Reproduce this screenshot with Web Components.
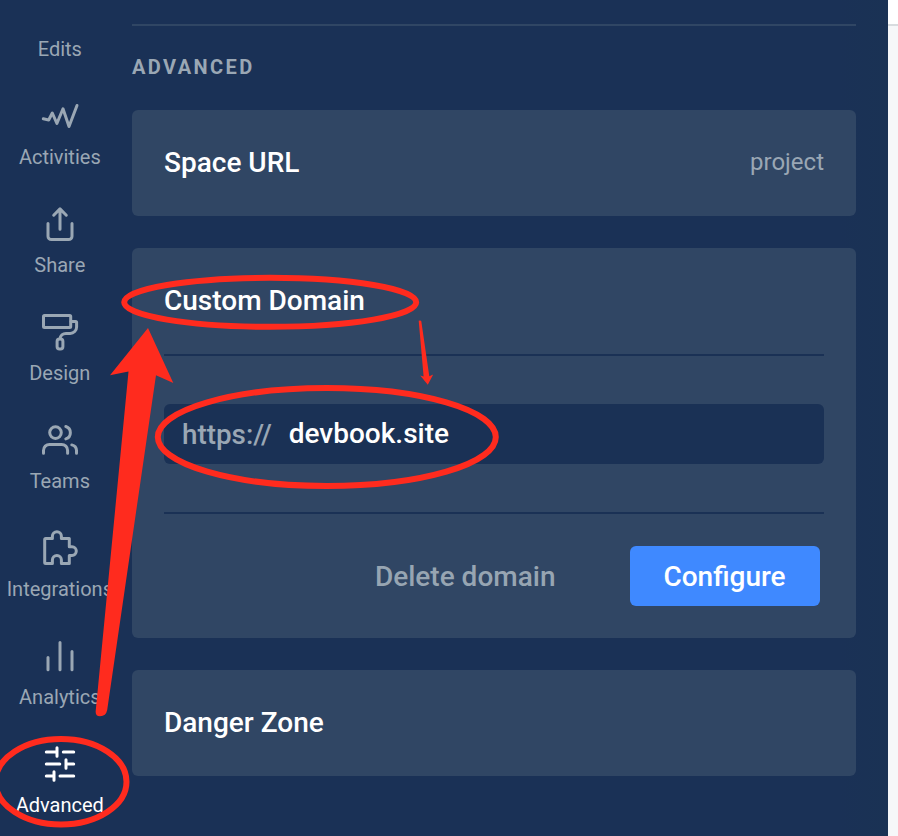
<!DOCTYPE html>
<html lang="en">
<head>
<meta charset="utf-8">
<title>Space settings</title>
<style>
html,body{margin:0;height:100%;overflow:hidden}
body{font-family:Roboto,"Liberation Sans",sans-serif;background:#f6f7f9}
</style>
</head>
<body>
<settings-app></settings-app>
<script>
const define=(name,html,setup)=>customElements.define(name,class extends HTMLElement{
  constructor(){
    super();
    const t=document.createElement('template');
    t.innerHTML=html;
    this.attachShadow({mode:'open'}).append(t.content.cloneNode(true));
  }
  connectedCallback(){ if(setup) setup(this,this.shadowRoot); }
});

const ICONS={
  none:'',
  activities:'<path d="M3.3 22.8 8.7 24 12.3 17 16.9 27.5 23 12.8 29 30.5 37 9.5"/>',
  share:'<path d="M20 25.2V5M13.7 11.2 20 4.9l6.3 6.3M8 19.6V32.2a3.4 3.4 0 0 0 3.4 3.4H28.6a3.4 3.4 0 0 0 3.4-3.4V19.6"/>',
  design:'<rect x="3.5" y="3.4" width="27.2" height="12" rx="1"/><path d="M31 9.4h4.6a1 1 0 0 1 1 1v4.6a6.4 6.4 0 0 1-6.4 6.4H26a6 6 0 0 0-6 5.4"/><rect x="17.1" y="27" width="5.8" height="10" rx="2.4"/>',
  teams:'<circle cx="15.5" cy="12.6" r="5.8"/><path d="M25.8 6.5a6.5 6.5 0 0 1 0 12.4M3.5 33.3V30.4a6 6 0 0 1 6-6H21.6a6 6 0 0 1 6 6v2.9M31.8 24.9a6 6 0 0 1 4.7 5.6v2.8"/>',
  integrations:'<path d="M5.7 10.4H12.4V8.2a4.5 4.5 0 0 1 9 0V10.4H29.3V18.8H32a4.3 4.3 0 0 1 0 8.6H29.3V35.4H21.4V32a4.5 4.5 0 0 0-9 0V35.4H5.7a1 1 0 0 1-1-1V11.4a1 1 0 0 1 1-1Z"/>',
  analytics:'<path d="M8 21.4V33.8M20 6.4V33.8M32 15.4V33.8"/>',
  advanced:'<path d="M6.3 8H17M17 3.8V12.2M23.3 8H33.7M6.3 20H19.8M26 15.8V24.2M26 20H33.7M6.3 32H14M14 27.8V36.2M20 32H33.7"/>'
};

define('nav-item',`<style>
:host{display:flex;flex-direction:column;align-items:center;height:108px;gap:9px;color:#9aa7b4}
:host([active]){color:#fff}
svg{display:block;width:40px;height:40px;flex:none;fill:none;stroke:currentColor;stroke-width:3;stroke-linecap:round;stroke-linejoin:round}
span{font-size:20px;line-height:24px;white-space:nowrap;padding-right:.4px}
</style><svg viewBox="0 0 40 40"></svg><span><slot></slot></span>`,
(el,root)=>{root.querySelector('svg').innerHTML=ICONS[el.getAttribute('icon')];});

define('side-nav',`<style>
:host{display:flex;flex-direction:column;width:120px;flex:none;margin-top:-12px}
</style>
<nav-item icon="none">Edits</nav-item>
<nav-item icon="activities">Activities</nav-item>
<nav-item icon="share">Share</nav-item>
<nav-item icon="design">Design</nav-item>
<nav-item icon="teams">Teams</nav-item>
<nav-item icon="integrations">Integrations</nav-item>
<nav-item icon="analytics">Analytics</nav-item>
<nav-item icon="advanced" active>Advanced</nav-item>`);

define('setting-card',`<style>
:host{display:block;background:#304664;border-radius:6px;padding:0 32px}
header{display:flex;align-items:center;justify-content:space-between;height:106px}
h2{margin:0;font-weight:500;font-size:28px;line-height:32px;color:#fff}
.v{font-size:24px;line-height:30px;padding-bottom:2px;color:#9aa7b4}
</style><header><h2><slot name="title"></slot></h2><div class="v"><slot name="value"></slot></div></header><slot></slot>`);

define('domain-form',`<style>
:host{display:block;padding-bottom:32px}
.field{display:flex;align-items:center;border-top:2px solid #1a3155;border-bottom:2px solid #1a3155;padding:48px 0}
.input{display:flex;align-items:center;width:100%;box-sizing:border-box;height:60px;padding:0 18px;border-radius:6px;background:#1a3155;font-size:28px;line-height:32px;font-weight:500;gap:17px;color:#9aa7b4}
.prefix{font-size:27.8px;padding-top:2px}
.value{color:#fff}
.actions{display:flex;justify-content:flex-end;align-items:center;gap:41px;padding:32px 4px 0 0;font-size:28px;font-weight:500}
.btn{display:flex;align-items:center;justify-content:center;height:60px;box-sizing:border-box}
.delete{color:#97a5b2;padding:0 33.5px 0 33px}
.primary{width:190px;padding-right:1px;background:#3f89ff;color:#fff;border-radius:6px}
</style>
<div class="field"><div class="input"><span class="prefix">https://</span><span class="value">devbook.site</span></div></div>
<div class="actions"><div class="btn delete">Delete domain</div><div class="btn primary">Configure</div></div>`);

define('settings-panel',`<style>
:host{display:flex;flex-direction:column;width:724px;margin:24px 0 0 12px}
h1{margin:0;border-top:2px solid #304664;height:84px;line-height:82px;font-size:20px;font-weight:700;letter-spacing:2.4px;color:#9aa7b4}
.cards{display:flex;flex-direction:column;gap:32px}
</style>
<h1>ADVANCED</h1>
<div class="cards">
<setting-card><span slot="title">Space URL</span><span slot="value">project</span></setting-card>
<setting-card><span slot="title">Custom Domain</span><domain-form></domain-form></setting-card>
<setting-card><span slot="title">Danger Zone</span></setting-card>
</div>`);

define('red-markup',`<style>
:host{position:absolute;inset:0;pointer-events:none}
svg{display:block;width:898px;height:836px;fill:none;stroke:#ff2b1e;stroke-width:6}
.fill{fill:#ff2b1e;stroke:none}
</style><svg viewBox="0 0 898 836">
<ellipse cx="270.2" cy="302.3" rx="146" ry="24.5"/>
<ellipse cx="326.8" cy="437" rx="169" ry="49"/>
<ellipse cx="61" cy="781.7" rx="65.5" ry="42.7"/>
<path class="fill" d="M148 328 173.3 383 156 375.2 107.2 710Q106 716.2 100 716.2 95.2 716.2 95.7 711L128.5 371.6 110 375.3Z"/>
<path class="fill" d="M418.7 320.8Q420.6 319.8 421.3 321.2L429.3 376.2 433.2 374.4 427.8 384.8 420.2 375.6 423.6 376.5Z"/>
</svg>`);

define('settings-app',`<style>
:host{display:flex;position:relative;width:898px;height:836px;overflow:hidden}
main{display:flex;align-items:flex-start;width:888px;height:836px;flex:none;overflow:hidden;background:linear-gradient(to right,#1a3156 840px,#1a3254 888px)}
aside{flex:1;background:#f6f7f9}
aside div{height:24px;background:#fff;border-bottom:2px solid #d8dcdf}
</style><main><side-nav></side-nav><settings-panel></settings-panel></main><aside><div></div></aside><red-markup></red-markup>`);
</script>
</body>
</html>
